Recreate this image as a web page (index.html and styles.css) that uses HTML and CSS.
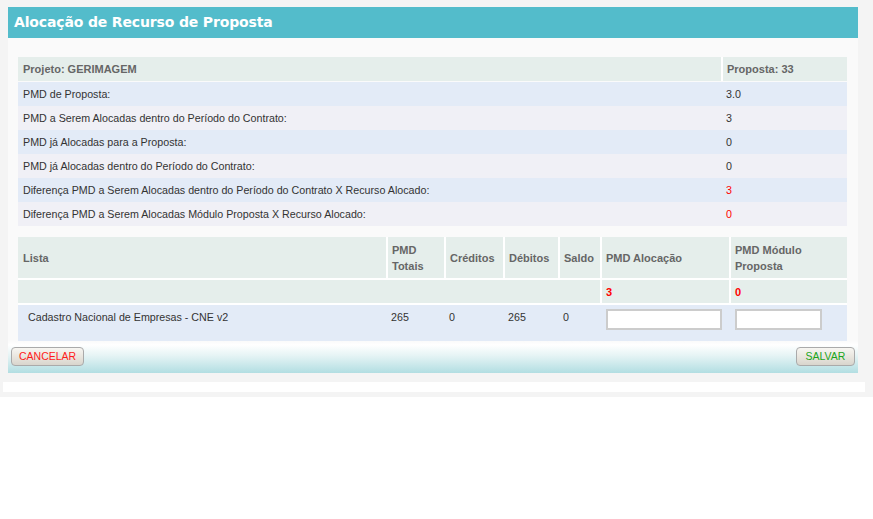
FILE: index.html
```html
<!DOCTYPE html>
<html lang="pt">
<head>
<meta charset="utf-8">
<title>Alocação de Recurso de Proposta</title>
<link rel="stylesheet" href="styles.css">
</head>
<body>
<div class="page">
  <div class="panel">
    <div class="panel-title">Alocação de Recurso de Proposta</div>
    <div class="panel-body">
      <div class="summary">
        <div class="sum-head">
          <div class="hcell">Projeto: GERIMAGEM</div>
          <div class="hcell">Proposta: 33</div>
        </div>
        <div class="sum-row odd"><div class="lbl">PMD de Proposta:</div><div class="val">3.0</div></div>
        <div class="sum-row even"><div class="lbl">PMD a Serem Alocadas dentro do Período do Contrato:</div><div class="val">3</div></div>
        <div class="sum-row odd"><div class="lbl">PMD já Alocadas para a Proposta:</div><div class="val">0</div></div>
        <div class="sum-row even"><div class="lbl">PMD já Alocadas dentro do Período do Contrato:</div><div class="val">0</div></div>
        <div class="sum-row odd"><div class="lbl">Diferença PMD a Serem Alocadas dentro do Período do Contrato X Recurso Alocado:</div><div class="val red">3</div></div>
        <div class="sum-row even"><div class="lbl">Diferença PMD a Serem Alocadas Módulo Proposta X Recurso Alocado:</div><div class="val red">0</div></div>
      </div>

      <div class="list">
        <div class="list-head">
          <div class="hcell">Lista</div>
          <div class="hcell">PMD<br>Totais</div>
          <div class="hcell">Créditos</div>
          <div class="hcell">Débitos</div>
          <div class="hcell">Saldo</div>
          <div class="hcell">PMD Alocação</div>
          <div class="hcell">PMD Módulo<br>Proposta</div>
        </div>
        <div class="list-totals">
          <div class="tcell span5"></div>
          <div class="tcell red">3</div>
          <div class="tcell red">0</div>
        </div>
        <div class="list-row">
          <div class="dcell first">Cadastro Nacional de Empresas - CNE v2</div>
          <div class="dcell">265</div>
          <div class="dcell">0</div>
          <div class="dcell">265</div>
          <div class="dcell">0</div>
          <div class="dcell inp"><input type="text" class="field field-a"></div>
          <div class="dcell inp"><input type="text" class="field field-b"></div>
        </div>
      </div>
    </div>
    <div class="panel-foot">
      <button class="btn btn-cancel" type="button">CANCELAR</button>
      <button class="btn btn-save" type="button">SALVAR</button>
    </div>
  </div>
  <div class="strip"></div>
</div>
</body>
</html>
```

FILE: styles.css
```css
html, body {
  margin: 0;
  padding: 0;
  background: #ffffff;
}
body {
  font-family: "Liberation Sans", Arial, sans-serif;
  font-size: 10.7px;
  color: #333333;
}
.page {
  background: #f4f4f4;
  padding: 7px 0 5px 0;
}
.panel {
  margin-left: 8px;
  width: 850px;
  background: #fafafa;
}
.panel-title {
  height: 31px;
  line-height: 31px;
  background: #53bccb;
  color: #ffffff;
  font-family: "DejaVu Sans", Verdana, sans-serif;
  font-weight: bold;
  font-size: 14px;
  letter-spacing: -0.15px;
  padding-left: 6px;
}
.panel-body {
  padding: 19px 11px 0 10px;
}
.hcell {
  background: #e5eeeb;
  color: #666666;
  font-weight: bold;
  font-size: 11px;
  display: flex;
  align-items: center;
}
.summary .sum-head {
  display: grid;
  grid-template-columns: 703px 124px;
  column-gap: 2px;
  background: #ffffff;
  height: 24px;
  margin-bottom: 1px;
}
.summary .sum-head .hcell {
  padding-left: 5px;
}
.summary .sum-head .hcell + .hcell {
  padding-left: 4px;
}
.sum-row {
  display: grid;
  grid-template-columns: 703px 124px;
  column-gap: 2px;
  height: 24px;
  align-items: center;
}
.sum-row.odd { background: #e3ebf7; }
.sum-row.even { background: #f0f0f6; }
.sum-row .lbl { padding-left: 5px; }
.sum-row .val { padding-left: 3px; }
.red { color: #ff0000; }

.list {
  margin-top: 11px;
  background: #ffffff;
}
.list-head, .list-totals, .list-row {
  display: grid;
  grid-template-columns: 368px 56px 57px 53px 40px 127px 116px;
  column-gap: 2px;
}
.list-head {
  height: 41px;
  line-height: 16px;
}
.list-head .hcell { padding-left: 4px; }
.list-head .hcell:first-child { padding-left: 5px; }
.list-totals {
  margin-top: 2px;
  height: 23px;
}
.tcell {
  background: #e5eeeb;
  font-weight: bold;
  font-size: 11px;
  display: flex;
  align-items: center;
  padding-left: 4px;
}
.tcell.span5 { grid-column: span 5; }
.list-row {
  margin-top: 2px;
  height: 36px;
  background: #e3ebf7;
}
.dcell {
  padding: 6px 0 0 3px;
  line-height: 13px;
}
.dcell.first { padding-left: 10px; }
.dcell.inp { padding: 4px 0 0 4px; }
.field {
  box-sizing: border-box;
  height: 21px;
  border: 2px solid #cccccc;
  background: #ffffff;
  margin: 0;
  padding: 0 3px;
  display: block;
}
.field-a { width: 116px; }
.field-b { width: 87px; }

.panel-foot {
  margin-top: 0;
  height: 32px;
  padding: 0 3px;
  display: flex;
  justify-content: space-between;
  align-items: flex-start;
  background: linear-gradient(to bottom, #fafafa 0%, #ffffff 12%, #e6f4f5 45%, #b2dee2 100%);
}
.btn {
  margin-top: 6px;
  height: 19px;
  border: 1px solid #aaaaaa;
  border-radius: 4px;
  background: linear-gradient(to bottom, #f7f6f2 0%, #e9e6df 50%, #d9d5cd 100%);
  font-family: "Liberation Sans", Arial, sans-serif;
  font-size: 10.5px;
  padding: 0 7px;
  line-height: 17px;
  cursor: pointer;
}
.btn-cancel { color: #ff1a1a; width: 73px; }
.btn-save { color: #1aa51a; width: 59px; }
.strip {
  margin: 9px 0 0 3px;
  width: 862px;
  height: 10px;
  background: #ffffff;
}
```
